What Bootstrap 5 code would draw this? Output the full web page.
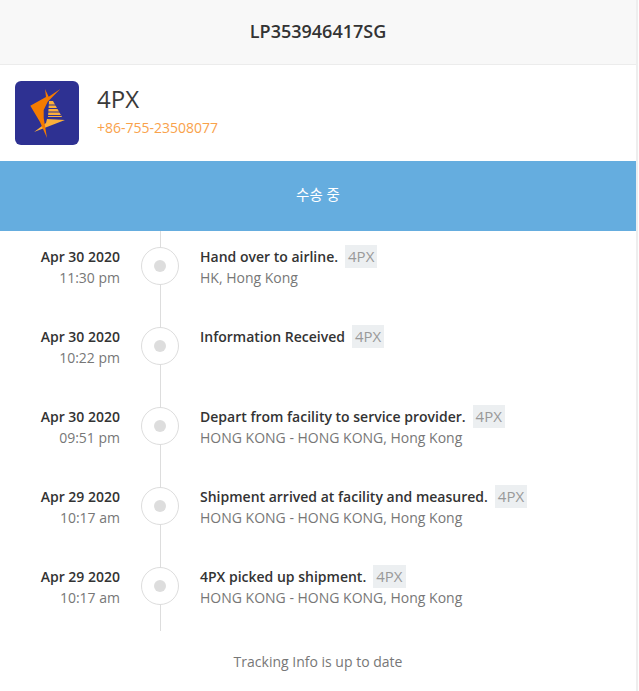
<!DOCTYPE html>
<html lang="en">

<head>
    <meta charset="UTF-8">
    <title>LP353946417SG</title>
    <link rel="stylesheet" href="https://cdn.jsdelivr.net/npm/bootstrap@5.3.0/dist/css/bootstrap.min.css">
    <style>
        body {
            font-family: "Open Sans", "Noto Sans CJK KR", sans-serif;
            font-size: 14px;
            color: #333;
            background: #fff;
        }

        .track-wrap {
            width: 636px;
            height: 691px;
            border-right: 2px solid #eee;
            box-sizing: content-box;
            overflow: hidden;
        }

        .track-head {
            height: 65px;
            background: #f8f8f8;
            border-bottom: 1px solid #ececec;
            font-size: 18px;
            font-weight: 600;
            padding-bottom: 2px;
        }

        .carrier {
            height: 96px;
            padding-left: 15px;
            gap: 18px;
        }

        .carrier-logo {
            width: 64px;
            height: 64px;
            border-radius: 6px;
            display: block;
        }

        .carrier-name {
            font-size: 24px;
            line-height: 30px;
            color: #3a3a3a;
        }

        .carrier-phone {
            color: #f9a24b;
            line-height: 20px;
            margin-top: 4px;
        }

        .carrier-text {
            padding-bottom: 4px;
        }

        .status-bar {
            height: 70px;
            background: #65addf;
            color: #fff;
            padding-bottom: 3px;
            font-size: 14.5px;
        }

        .timeline {
            position: relative;
        }

        .timeline::before {
            content: "";
            position: absolute;
            left: 160px;
            top: 0;
            bottom: 0;
            width: 1px;
            background: #ddd;
        }

        .event {
            height: 80px;
            padding-top: 15px;
        }

        .event-time {
            width: 120px;
            text-align: right;
            line-height: 21px;
            color: #777;
        }

        .event-date {
            color: #333;
            font-weight: 600;
        }

        .event-node {
            width: 38px;
            height: 38px;
            margin: 1px 0 0 21px;
            border: 1px solid #ddd;
            border-radius: 50%;
            background: #fff;
            position: relative;
            flex: none;
        }

        .event-node::after {
            content: "";
            position: absolute;
            left: 12px;
            top: 12px;
            width: 12px;
            height: 12px;
            border-radius: 50%;
            background: #ddd;
        }

        .event-body {
            margin-left: 21px;
            line-height: 21px;
            color: #777;
        }

        .event-line {
            height: 21px;
            gap: 7px;
        }

        .event-title {
            color: #333;
            font-weight: 600;
        }

        .event-tag {
            background: #eceff1;
            color: #999;
            padding: 0 3px;
            line-height: 23px;
            font-size: 15px;
            margin-top: -1px;
        }

        .uptodate {
            color: #777;
            line-height: 20px;
            margin-top: 21px;
        }
    </style>
</head>

<body>
    <div class="track-wrap">
        <div class="track-head d-flex align-items-center justify-content-center">LP353946417SG</div>

        <div class="carrier d-flex align-items-center">
            <!-- logo redrawn by hand -->
            <svg class="carrier-logo" viewBox="0 0 64 64">
                <rect width="64" height="64" fill="#2e3192"></rect>
                <path d="M34 20 L38 20 L47 36 L33 36 Z" fill="#fbb03b"></path>
                <path d="M33 24h8M33 27.500h10M33 31h12M33 34.500h13" stroke="#2e3192" stroke-width="1.200"></path>
                <path d="M31 42 L32 38 L50 39 L19 51 Z" fill="#fbb03b"></path>
                <path d="M30 8 L33.700 15.700 L45.300 8 L32.700 20.700 L28.700 29 L28.700 37 L32 57 L25 41 L15.300 24.700 L31 16 Z" fill="#f47b00"></path>
            </svg>
            <div class="carrier-text">
                <div class="carrier-name">4PX</div>
                <div class="carrier-phone">+86-755-23508077</div>
            </div>
        </div>

        <div class="status-bar d-flex align-items-center justify-content-center">수송 중</div>

        <div class="timeline">
            <div class="event d-flex">
                <div class="event-time">
                    <div class="event-date">Apr 30 2020</div>
                    <div>11:30 pm</div>
                </div>
                <div class="event-node"></div>
                <div class="event-body">
                    <div class="event-line d-flex align-items-center"><span class="event-title">Hand over to airline.</span><span class="event-tag">4PX</span></div>
                    <div>HK, Hong Kong</div>
                </div>
            </div>
            <div class="event d-flex">
                <div class="event-time">
                    <div class="event-date">Apr 30 2020</div>
                    <div>10:22 pm</div>
                </div>
                <div class="event-node"></div>
                <div class="event-body">
                    <div class="event-line d-flex align-items-center"><span class="event-title">Information Received</span><span class="event-tag">4PX</span></div>
                </div>
            </div>
            <div class="event d-flex">
                <div class="event-time">
                    <div class="event-date">Apr 30 2020</div>
                    <div>09:51 pm</div>
                </div>
                <div class="event-node"></div>
                <div class="event-body">
                    <div class="event-line d-flex align-items-center"><span class="event-title">Depart from facility to service provider.</span><span class="event-tag">4PX</span></div>
                    <div>HONG KONG - HONG KONG, Hong Kong</div>
                </div>
            </div>
            <div class="event d-flex">
                <div class="event-time">
                    <div class="event-date">Apr 29 2020</div>
                    <div>10:17 am</div>
                </div>
                <div class="event-node"></div>
                <div class="event-body">
                    <div class="event-line d-flex align-items-center"><span class="event-title">Shipment arrived at facility and measured.</span><span class="event-tag">4PX</span></div>
                    <div>HONG KONG - HONG KONG, Hong Kong</div>
                </div>
            </div>
            <div class="event d-flex">
                <div class="event-time">
                    <div class="event-date">Apr 29 2020</div>
                    <div>10:17 am</div>
                </div>
                <div class="event-node"></div>
                <div class="event-body">
                    <div class="event-line d-flex align-items-center"><span class="event-title">4PX picked up shipment.</span><span class="event-tag">4PX</span></div>
                    <div>HONG KONG - HONG KONG, Hong Kong</div>
                </div>
            </div>
        </div>

        <div class="uptodate text-center">Tracking Info is up to date</div>
    </div>

    <script src="https://cdn.jsdelivr.net/npm/bootstrap@5.3.0/dist/js/bootstrap.bundle.min.js"></script>
</body>

</html>
